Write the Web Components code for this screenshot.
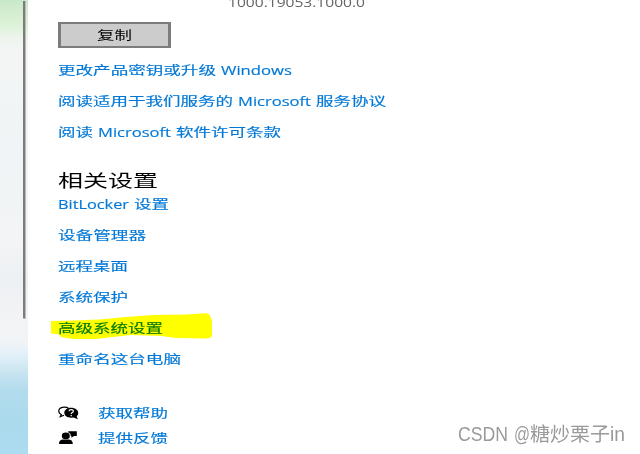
<!DOCTYPE html>
<html lang="zh-CN">
<head>
<meta charset="utf-8">
<title>关于</title>
<style>
  html, body {
    margin: 0;
    height: 100%;
    overflow: hidden;
    background: #fff;
  }
</style>
</head>
<body>
<about-page></about-page>

<script>
'use strict';

const FONT = '"Open Sans", "Noto Sans CJK SC", sans-serif';

// Text stretched horizontally until it takes exactly `width` pixels
class WideText extends HTMLElement {
  constructor() {
    super();
    this.attachShadow({mode: 'open'}).innerHTML = `
      <style>
        :host {
          display: inline-block;
          flex: none;
          white-space: nowrap;
        }
        span {
          display: inline-block;
          transform-origin: 0 50%;
        }
      </style>
      <span><slot></slot></span>
    `;
  }

  connectedCallback() {
    const span = this.shadowRoot.querySelector('span');
    const width = +this.getAttribute('width');
    span.style.transform = `scaleX(${width / span.getBoundingClientRect().width})`;
    this.style.width = width + 'px';
  }
}

class DesktopStrip extends HTMLElement {
  constructor() {
    super();
    this.attachShadow({mode: 'open'}).innerHTML = `
      <style>
        :host {
          display: flex;
          justify-content: flex-end;
          flex: none;
          box-sizing: border-box;
          width: 28px;
          padding: 1px 2px 0 0;
          background: linear-gradient(#c8e8cb 0, #d3edcf 12px, #e0f3dc 28px, #eef4ed 38px, #f3f5f4 50px,
            #f0f4f6 150px, #f2f4f5 240px, #edf0f3 280px, #f3f4f5 325px, #f1f4f7 341px,
            #e2f0f8 355px, #c9e5f0 372px, #b2dced 390px, #acdaed 420px, #addbef 454px);
        }
        div {
          box-sizing: border-box;
          width: 3px;
          height: 318px;
          background: #7c7c7c;
          border-right: 1px solid #bbb;
          border-bottom: 1px solid #bbb;
        }
      </style>
      <div></div>
    `;
  }
}

class CopyButton extends HTMLElement {
  constructor() {
    super();
    this.attachShadow({mode: 'open'}).innerHTML = `
      <style>
        :host {
          display: flex;
          align-items: center;
          justify-content: center;
          box-sizing: border-box;
          width: 113px;
          height: 26px;
          padding-top: 1px;
          border: solid #7c7c7c;
          border-width: 2px 3px;
          background: #ccc;
          color: #000;
          -webkit-text-stroke: 0;
        }
      </style>
      <slot></slot>
    `;
  }
}

class LinkRow extends HTMLElement {
  constructor() {
    super();
    this.attachShadow({mode: 'open'}).innerHTML = `
      <style>
        :host {
          display: flex;
          align-items: center;
          gap: 5px;
          position: relative;
          height: 31px;
          color: #0078d7;
        }
        .marker {
          display: none;
          position: absolute;
          left: -7px;
          top: 0;
          mix-blend-mode: multiply;
          pointer-events: none;
        }
        :host([marked]) .marker {
          display: block;
        }
      </style>
      <slot></slot>
      <svg class="marker" width="162" height="31" viewBox="0 0 162 31">
        <path fill="#ff0" d="M0 8 L22 7.500 L48 6.500 L75 4 L101 2 L135 1.500 L154 .200 Q159 0 159.500 4 L161 8 L161 22 Q161 25.500 154 25.500 L125 25 L110 23 L80 22 L62 24 L45 26 L22 26 L10 24 L8 21.500 L0 20.500 Z"/>
      </svg>
    `;
  }
}

const ICONS = {
  help: `
    <path d="M10.500 2.300 C7.500 .200 .800 .800 .800 5 C.800 6.700 1.800 7.900 3.300 8.500 L2.300 10.600 L6 9.300" fill="#fff" stroke="#000" stroke-width="1.200"/>
    <path d="M13 1.700 C9.200 1.700 6.300 3.900 6.300 6.800 C6.300 9.900 9.200 11.700 13 11.700 L15.500 11.500 L19.900 13.200 L18.700 10.400 C19.700 9.400 20.200 8.300 20.200 6.800 C20.200 3.900 17 1.700 13 1.700 Z"/>
    <path d="M11 5.200 C11.200 3.100 15.600 3.300 15.300 5.200 C15.200 6.600 13.200 6.400 13.200 8 M13.200 9 V10.200" fill="none" stroke="#fff" stroke-width="1.200"/>`,
  feedback: `
    <ellipse cx="7.800" cy="4.900" rx="4" ry="3.300"/>
    <path d="M1 13 C1 9.800 3 8.600 5.500 8.600 H10.500 C13 8.600 14.800 10 14.800 13 Z"/>
    <path d="M10.300 .300 H18.800 V5 H16 L13.400 6.800 V5 H12.700 C13 3.200 12 2.200 10.300 1.600 Z"/>`
};

class ActionRow extends HTMLElement {
  constructor() {
    super();
    this.attachShadow({mode: 'open'}).innerHTML = `
      <style>
        :host {
          display: flex;
          align-items: center;
          gap: 19px;
          height: 25px;
          color: #0078d7;
        }
        svg {
          flex: none;
          margin-top: -2px;
        }
      </style>
      <svg width="21" height="14" viewBox="0 0 21 14">${ICONS[this.getAttribute('icon')]}</svg>
      <slot></slot>
    `;
  }
}

class AboutPage extends HTMLElement {
  constructor() {
    super();
    this.attachShadow({mode: 'open'}).innerHTML = `
      <style>
        :host {
          display: flex;
          position: relative;
          height: 454px;
          overflow: hidden;
          background: #fff;
          font: 12px/16px ${FONT};
          -webkit-text-stroke: .15px;
        }
        main {
          flex: 1;
          padding-left: 30px;
        }
        .version {
          display: flex;
          align-items: flex-end;
          height: 11px;
          margin-bottom: 11px;
          padding-left: 170px;
          color: #666;
          -webkit-text-stroke: 0;
        }
        nav {
          margin-top: 7px;
        }
        h2 {
          display: flex;
          align-items: center;
          height: 24px;
          margin: 21px 0 -4px;
          font-size: 17px;
          font-weight: 400;
          line-height: 24px;
          color: #000;
          -webkit-text-stroke: 0;
        }
        .related {
          margin-top: 0;
        }
        .support {
          margin-top: 26px;
        }
        .watermark {
          display: flex;
          position: absolute;
          left: 458px;
          top: 422px;
          font: 19.800px/24px "Liberation Sans", "Noto Sans CJK SC", sans-serif;
          color: #9a9a9a;
          -webkit-text-stroke: 0;
        }
        .watermark :nth-child(2) {
          margin-left: 6px;
        }
      </style>
      <desktop-strip></desktop-strip>
      <main>
        <div class="version"><wide-text width="137">1000.19053.1000.0</wide-text></div>
        <copy-button><wide-text width="35">复制</wide-text></copy-button>
        <nav>
          <link-row><wide-text width="158">更改产品密钥或升级</wide-text><wide-text width="71">Windows</wide-text></link-row>
          <link-row><wide-text width="175">阅读适用于我们服务的</wide-text><wide-text width="73">Microsoft</wide-text><wide-text width="70">服务协议</wide-text></link-row>
          <link-row><wide-text width="35">阅读</wide-text><wide-text width="73">Microsoft</wide-text><wide-text width="105">软件许可条款</wide-text></link-row>
        </nav>
        <h2><wide-text width="100">相关设置</wide-text></h2>
        <nav class="related">
          <link-row><wide-text width="71">BitLocker</wide-text><wide-text width="35">设置</wide-text></link-row>
          <link-row><wide-text width="88">设备管理器</wide-text></link-row>
          <link-row><wide-text width="70">远程桌面</wide-text></link-row>
          <link-row><wide-text width="70">系统保护</wide-text></link-row>
          <link-row marked><wide-text width="105">高级系统设置</wide-text></link-row>
          <link-row><wide-text width="123">重命名这台电脑</wide-text></link-row>
        </nav>
        <nav class="support">
          <action-row icon="help"><wide-text width="70">获取帮助</wide-text></action-row>
          <action-row icon="feedback"><wide-text width="70">提供反馈</wide-text></action-row>
        </nav>
      </main>
      <div class="watermark">
        <wide-text width="50">CSDN</wide-text>
        <wide-text width="16">@</wide-text>
        <wide-text width="80">糖炒栗子</wide-text>
        <wide-text width="15">in</wide-text>
      </div>
    `;
  }
}

customElements.define('wide-text', WideText);
customElements.define('desktop-strip', DesktopStrip);
customElements.define('copy-button', CopyButton);
customElements.define('link-row', LinkRow);
customElements.define('action-row', ActionRow);
customElements.define('about-page', AboutPage);
</script>
</body>
</html>
